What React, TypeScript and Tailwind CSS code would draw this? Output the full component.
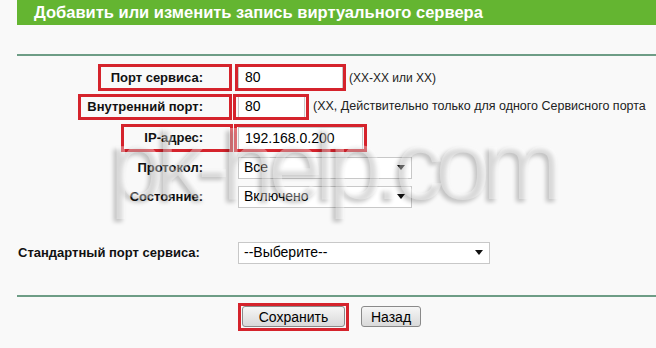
const font = "font-['Liberation_Sans',Arial,sans-serif]";

function TextField({ value, w }: { value: string; w: string }) {
  return (
    <div
      className={`${w} h-[23px] bg-white border border-[#c8c8c8] flex items-center pl-[6px] text-[14px] text-black`}
    >
      {value}
    </div>
  );
}

function Select({ value, w }: { value: string; w: string }) {
  return (
    <div
      className={`${w} h-[22px] bg-white border border-[#c8c8c8] flex items-center justify-between pl-[5px] pr-[6px] text-[14px] text-black`}
    >
      <span>{value}</span>
      <svg width="8" height="5" viewBox="0 0 8 5">
        <path d="M0 0 H8 L4 5 Z" fill="#111" />
      </svg>
    </div>
  );
}

function Label({ children }: { children: string }) {
  return (
    <div className="w-[203px] shrink-0 text-right font-bold text-[13px] text-[#111]">
      {children}
    </div>
  );
}

function RedBox({ x, y, w, h }: { x: number; y: number; w: number; h: number }) {
  return (
    <div
      className="absolute border-[3px] border-[#d5232c] pointer-events-none"
      style={{ left: x, top: y, width: w, height: h }}
    />
  );
}

export default function App() {
  return (
    <div className={`relative w-[656px] h-[348px] overflow-hidden bg-[#f9f9f9] ${font}`}>
      {/* header */}
      <div className="ml-[17px] h-[25px] bg-[#64b531] flex items-center pl-[17px]">
        <span className="text-white font-bold text-[16.5px] leading-none">
          Добавить или изменить запись виртуального сервера
        </span>
      </div>

      <div className="ml-[17px] mt-[29px] h-[2px] bg-[#6e9d86]" />

      {/* form */}
      <div className="flex flex-col">
        <div className="mt-[8px] h-[27px] flex items-center">
          <Label>Порт сервиса:</Label>
          <div className="ml-[35px] flex items-center">
            <TextField value="80" w="w-[105px]" />
            <span className="ml-[6px] text-[12px] text-[#222]">(ХХ-ХХ или ХХ)</span>
          </div>
        </div>

        <div className="mt-[2px] h-[27px] flex items-center">
          <Label>Внутренний порт:</Label>
          <div className="ml-[35px] flex items-center whitespace-nowrap">
            <TextField value="80" w="w-[67px]" />
            <span className="ml-[8px] text-[12.5px] text-[#222]">
              (ХХ, Действительно только для одного Сервисного порта
            </span>
          </div>
        </div>

        <div className="mt-[4px] h-[28px] flex items-center">
          <Label>IP-адрес:</Label>
          <div className="ml-[35px]">
            <TextField value="192.168.0.200" w="w-[125px]" />
          </div>
        </div>

        <div className="mt-[1px] h-[29px] flex items-center">
          <Label>Протокол:</Label>
          <div className="ml-[35px]">
            <Select value="Все" w="w-[174px]" />
          </div>
        </div>

        <div className="h-[29px] flex items-center">
          <Label>Состояние:</Label>
          <div className="ml-[35px]">
            <Select value="Включено" w="w-[174px]" />
          </div>
        </div>

        <div className="mt-[27px] h-[29px] flex items-center">
          <div className="w-[238px] shrink-0 pl-[18px] font-bold text-[13px] text-[#111]">
            Стандартный порт сервиса:
          </div>
          <Select value="--Выберите--" w="w-[252px]" />
        </div>
      </div>

      <div className="ml-[17px] mt-[28px] h-[2px] bg-[#6e9d86]" />

      {/* buttons */}
      <div className="mt-[6px] h-[27px] flex items-center pl-[242px] gap-[16px]">
        <button className="w-[103px] h-[21px] rounded-[3px] border border-[#8a8a8a] bg-gradient-to-b from-[#f6f6f6] to-[#d9d9d9] text-[14px] text-black leading-none">
          Сохранить
        </button>
        <button className="w-[60px] h-[21px] rounded-[3px] border border-[#8a8a8a] bg-gradient-to-b from-[#f6f6f6] to-[#d9d9d9] text-[14px] text-black leading-none">
          Назад
        </button>
      </div>

      {/* annotations */}
      <RedBox x={98} y={64} w={134} h={27} />
      <RedBox x={235} y={64} w={111} h={27} />
      <RedBox x={78} y={94} w={154} h={26} />
      <RedBox x={233} y={94} w={76} h={26} />
      <RedBox x={121} y={124} w={112} h={28} />
      <RedBox x={234} y={124} w={133} h={28} />
      <RedBox x={238} y={303} w={111} h={28} />

      {/* watermark */}
      <div className="absolute left-[110px] top-[116px] text-[98px] leading-none tracking-[-8px] text-white/35 [text-shadow:-3px_3px_4px_rgba(0,0,0,0.22)] pointer-events-none">
        pk-help.com
      </div>
    </div>
  );
}
